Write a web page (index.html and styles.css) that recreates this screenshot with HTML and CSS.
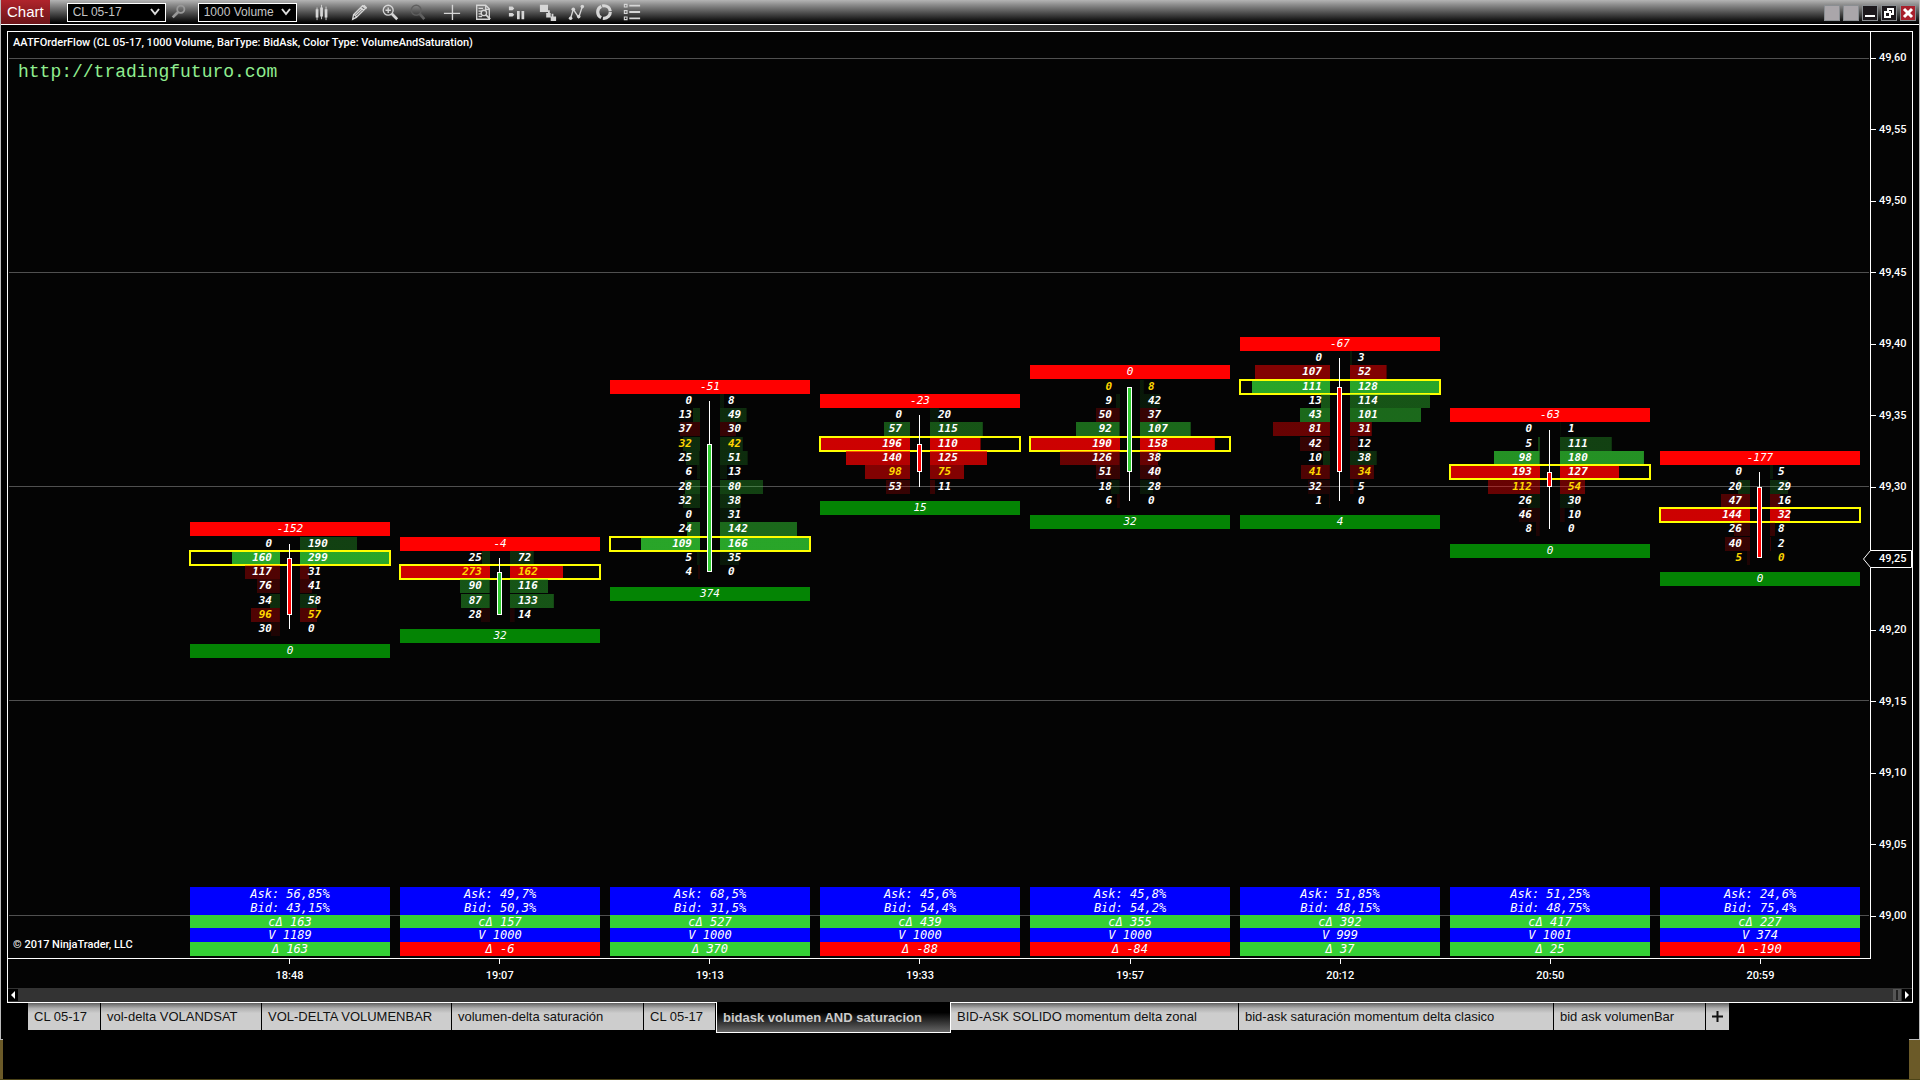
FILE: index.html
```html
<!DOCTYPE html>
<html lang="es">
<head>
    <meta charset="UTF-8">
    <meta name="viewport" content="width=device-width, initial-scale=1.0">
    <title>Chart - CL 05-17</title>
    <link rel="stylesheet" href="styles.css">
</head>
<body>
    <div class="window">
        <header class="toolbar">
            <h1 class="toolbar-title">Chart</h1>
            <div class="picker">
                <select class="instrument" aria-label="Instrument"><option>CL 05-17</option></select>
                <svg class="arrow" viewBox="0 0 10 8"><path d="M1 1l4 5 4-5" /></svg>
            </div>
            <button class="tool dim search" aria-label="Search">
                <svg viewBox="0 0 20 20"><circle cx="12" cy="7" r="4" stroke-width="2" /><path d="M9 10l-6 6" stroke-width="3" /></svg>
            </button>
            <div class="picker">
                <select class="interval" aria-label="Interval"><option>1000 Volume</option></select>
                <svg class="arrow" viewBox="0 0 10 8"><path d="M1 1l4 5 4-5" /></svg>
            </div>
            <div class="tools">
                <button class="tool" aria-label="Bar type">
                    <svg viewBox="0 0 20 20"><path d="M4.500 5v14M9.500 2v16M14.500 4v15" stroke-width="1" /><path class="solid" d="M3 7h3v9H3zM8 5h3v10H8zM13 7h3v9h-3z" /></svg>
                </button>
                <button class="tool space-l" aria-label="Drawing tools">
                    <svg viewBox="0 0 20 20"><path d="M3 18l1-5L14 3l3 3L7 16zM12 5l3 3M5 13l3 3M6 14l8-8" stroke-width="1.500" /><path class="solid" d="M14 3l2-1 3 3-1 2z" /></svg>
                </button>
                <button class="tool space-s" aria-label="Zoom in">
                    <svg viewBox="0 0 20 20"><circle cx="8" cy="8" r="5.500" stroke-width="1.500" /><path d="M5 8h6M8 5v6" stroke-width="1.500" /><path d="M12 12l6 6" stroke-width="3" /></svg>
                </button>
                <button class="tool off" aria-label="Zoom out" disabled>
                    <svg viewBox="0 0 20 20"><circle cx="8" cy="8" r="5.500" stroke-width="1.500" /><path d="M12 12l5 6" stroke-width="3" /></svg>
                </button>
                <button class="tool space-m" aria-label="Crosshair">
                    <svg viewBox="0 0 20 20"><path d="M1 11.500h18M10.500 2v17" stroke-width="1.500" /></svg>
                </button>
                <button class="tool space-s" aria-label="Data box">
                    <svg viewBox="0 0 20 20"><path d="M3 2.500h10l4 4V18H3zM13 2.500V7h4M5 6h5M5 9h3M5 12h3M5 15h4" stroke-width="1.500" /><circle cx="11" cy="11" r="3" stroke-width="1.500" /><path d="M13 13l5 5" stroke-width="2" /></svg>
                </button>
                <button class="tool space-m" aria-label="Chart trader">
                    <svg viewBox="0 0 20 20"><path class="solid" d="M1 4h4l2 2-2 2H1zM1 11h4l2 2-2 2H1zM10 9h3v9h-3zM15 9h3v9h-3z" /></svg>
                </button>
                <button class="tool space-s" aria-label="Data series">
                    <svg viewBox="0 0 20 20"><path class="solid" d="M1 2h9v8H1zM8 11h5v5H8zM13 15h6v5h-6zM10 8h2v4h-2zM14 12h2v4h-2z" /></svg>
                </button>
                <button class="tool" aria-label="Indicators">
                    <svg viewBox="0 0 20 20"><path d="M4 17L7 7l6 9 4-12" stroke-width="1.500" /><circle class="solid" cx="4" cy="17" r="2" /><circle class="solid" cx="7" cy="7" r="2" /><circle class="solid" cx="13" cy="15" r="2" /><circle class="solid" cx="17" cy="4" r="2" /></svg>
                </button>
                <button class="tool" aria-label="Strategies">
                    <svg viewBox="0 0 20 20"><circle cx="10" cy="10" r="7" stroke-width="3.500" stroke-dasharray="12 2 15 1 12 2" /></svg>
                </button>
                <button class="tool" aria-label="Properties">
                    <svg viewBox="0 0 20 20"><path d="M1.500 1.500h3v3h-3zM1.500 8.500h3v3h-3zM1.500 15.500h3v3h-3z" stroke-width="1.200" /><path d="M7 3h12M7 10h12M7 17h12" stroke-width="2" /></svg>
                </button>
            </div>
            <div class="window-buttons">
                <button class="blank" aria-label="Link instrument"></button>
                <button class="blank" aria-label="Link interval"></button>
                <button aria-label="Minimize"><svg viewBox="0 0 14 14"><path d="M2 10h10" /></svg></button>
                <button aria-label="Restore"><svg viewBox="0 0 14 14"><path d="M3 6h5v5H3zM6 6V3h5v5H8" /></svg></button>
                <button class="close" aria-label="Close"><svg viewBox="0 0 14 14"><path d="M3 3l8 8M11 3l-8 8" stroke-width="3" /></svg></button>
            </div>
        </header>

        <main class="workspace">
            <section class="panel">
                <div class="plot" id="plot"></div>
                <div class="price-axis" id="priceAxis"></div>
                <div class="time-axis" id="timeAxis"></div>
                <div class="scrollbar">
                    <button aria-label="Scroll left"><svg viewBox="0 0 10 12"><path d="M7 2v8L3 6z" /></svg></button>
                    <div class="thumb"></div>
                    <button aria-label="Scroll right"><svg viewBox="0 0 10 12"><path d="M3 2v8l4-4z" /></svg></button>
                </div>
                <p class="indicator-label">AATFOrderFlow (CL 05-17, 1000 Volume, BarType: BidAsk, Color Type: VolumeAndSaturation)</p>
                <p class="site">http://tradingfuturo.com</p>
                <p class="copyright">© 2017 NinjaTrader, LLC</p>
            </section>

            <nav class="tabs">
                <button>CL 05-17</button>
                <button>vol-delta VOLANDSAT</button>
                <button>VOL-DELTA VOLUMENBAR</button>
                <button>volumen-delta saturación</button>
                <button>CL 05-17</button>
                <button class="active">bidask volumen AND saturacion</button>
                <button>BID-ASK SOLIDO momentum delta zonal</button>
                <button>bid-ask saturación momentum delta clasico</button>
                <button>bid ask volumenBar</button>
                <button class="add" aria-label="New tab"><svg viewBox="0 0 11 11"><path d="M0 5.500h11M5.500 0v11" /></svg></button>
            </nav>
        </main>
    </div>
    <div class="desktop">
        <div class="edge-left"></div>
        <div class="edge-right"></div>
    </div>

    <script src="script.js"></script>
</body>
</html>
```
FILE: styles.css
```css
:root {
    --up: #32cd32;
    --down: #ff0000;
    --line: #ffffff;
    --grid: #505050;
    --back: #040404;
    --desktop: #6b5a28;
    --columns: 172px repeat(8, minmax(0, 1fr)) 0;
}

* {
    margin: 0;
    padding: 0;
    box-sizing: border-box;
}

body {
    display: flex;
    flex-direction: column;
    height: 100vh;
    background: #000;
    color: #fff;
    font-family: "Liberation Sans", Arial, sans-serif;
    font-size: 11px;
    overflow: hidden;
}

button,
select {
    font: inherit;
    color: inherit;
    background: none;
    border: none;
    border-radius: 0;
}

svg {
    display: block;
    fill: none;
    stroke: currentColor;
}

.window {
    flex: 1;
    min-height: 0;
    display: flex;
    flex-direction: column;
    border-left: 1px solid #bbb;
    border-right: 1px solid #bbb;
}

/* Toolbar */
.toolbar {
    display: flex;
    align-items: center;
    height: 25px;
    border-bottom: 1px solid var(--line);
    background: linear-gradient(#b4b4b4, #8c8c8c 20%, #000 96%);
}

.toolbar-title {
    align-self: stretch;
    padding: 0 6px;
    margin-right: 17px;
    font-size: 15px;
    font-weight: normal;
    line-height: 24px;
    background: linear-gradient(#b0242c, #6c1418);
}

.picker {
    position: relative;
}

.picker select {
    appearance: none;
    display: block;
    height: 19px;
    padding: 0 5px;
    border: 1px solid var(--line);
    background: #000;
    color: #c4c4c4;
    font-size: 12px;
}

.picker .instrument,
.picker .interval {
    width: 99px;
}

.picker .arrow {
    position: absolute;
    right: 6px;
    top: 5px;
    width: 10px;
    height: 8px;
    color: #ddd;
    stroke-width: 2;
    pointer-events: none;
}

.tool {
    width: 20px;
    height: 20px;
    color: #d6d6d6;
}

.tool svg {
    width: 18px;
    height: 18px;
    margin: 0 auto;
}

.tool .solid {
    fill: currentColor;
    stroke: none;
}

.search {
    margin: 0 9px 0 3px;
}

.dim {
    color: #999;
}

.off {
    color: #606060;
}

.tools {
    display: flex;
    gap: 8px;
    margin-left: 15px;
}

.space-s { margin-left: 3px; }
.space-m { margin-left: 6px; }
.space-l { margin-left: 9px; }

.window-buttons {
    display: flex;
    gap: 3px;
    margin: 2px 3px 0 auto;
}

.window-buttons button {
    width: 16px;
    height: 16px;
    border: 1px solid #8a8e92;
    background: #1c181c;
}

.window-buttons svg {
    width: 14px;
    height: 14px;
    stroke-width: 2;
}

.window-buttons .blank {
    background: #aaa6aa;
}

.window-buttons .close {
    background: #a8202c;
}

/* Chart panel */
.workspace {
    flex: 1;
    min-height: 0;
    display: flex;
    flex-direction: column;
    padding: 6px 6px 0;
    background: linear-gradient(to right, #000, #333 15%, #333 50%, #000 90%) top / 100% 6px no-repeat #000;
}

.panel {
    position: relative;
    flex: 1;
    min-height: 0;
    display: grid;
    grid-template-columns: minmax(0, 1fr) 41px;
    grid-template-rows: minmax(0, 1fr) 29px 14px;
    border: 1px solid var(--line);
    background: var(--back);
    font-family: Roboto, "Liberation Sans", sans-serif;
    font-weight: 500;
}

.plot,
.price-axis {
    display: grid;
    grid-template-rows: repeat(127, minmax(0, 1fr));
    padding-top: 19px;
}

.plot {
    grid-template-columns: var(--columns);
    column-gap: 10px;
    border-right: 1px solid var(--line);
    border-bottom: 1px solid var(--line);
}

.gridline {
    grid-column: 1 / -1;
    align-self: center;
    height: 1px;
    margin: 0 1px;
    border: none;
    background: var(--grid);
}

/* One footprint bar; its rows are half price ticks */
.footprint {
    grid-row: 1 / -1;
    display: grid;
    grid-template-rows: subgrid;
    grid-template-columns: minmax(0, 1fr);
    font: italic bold 11px/14px "DejaVu Sans Mono", monospace;
}

.footprint > * {
    grid-column: 1;
}

.head,
.foot,
.level {
    height: 14px;
}

.head,
.foot {
    text-align: center;
    font-weight: normal;
    background: var(--down);
}

.foot {
    background: #048404;
}

.level {
    display: grid;
    grid-template-columns: minmax(0, 1fr) minmax(0, 1fr);
    column-gap: 20px;
}

.level span {
    padding: 0 8px;
    background: linear-gradient(var(--fill), var(--fill)) left / var(--size) 100% no-repeat;
}

.level .bid {
    text-align: right;
    background-position: right;
}

.rise {
    --fill: rgb(50 205 50 / var(--strength));
}

.fall {
    --fill: rgb(255 0 0 / var(--strength));
}

.traded {
    color: #ffd700;
}

.poc {
    outline: 2px solid #ffff00;
    outline-offset: -1px;
}

.wick,
.candle {
    justify-self: center;
    margin-right: 1px;
}

.wick {
    width: 1px;
    background: #fff;
}

.candle {
    width: 5px;
    border: 1px solid #fff;
}

.candle.up { background: var(--up); }
.candle.down { background: var(--down); }

/* Totals under each bar */
.totals {
    grid-row: 1 / -1;
    align-self: end;
    z-index: 1;
    margin-bottom: 2px;
    font: italic 12px/14px "DejaVu Sans Mono", monospace;
    text-align: center;
}

.totals p {
    height: 14px;
    background: #0000ff;
}

.totals .cumulative {
    height: 13px;
}

.totals .positive { background: #35d035; }
.totals .negative { background: var(--down); }

/* Axes */
.price {
    grid-column: 1;
    align-self: center;
    display: flex;
    align-items: center;
    gap: 3px;
    height: 14px;
    line-height: 14px;
}

.price::before {
    content: "";
    width: 5px;
    height: 1px;
    background: var(--line);
}

.price.last {
    z-index: 1;
}

.price.last::before {
    background: none;
}

.marker {
    grid-column: 1;
    align-self: center;
    width: 49px;
    height: 18px;
    margin-left: -8px;
}

.time-axis {
    grid-column: 1;
    display: grid;
    grid-template-columns: var(--columns);
    column-gap: 10px;
}

.time {
    display: flex;
    flex-direction: column;
    align-items: center;
    gap: 5px;
    margin-right: 1px;
    line-height: 14px;
}

.time::before {
    content: "";
    width: 1px;
    height: 5px;
    background: var(--line);
}

.scrollbar {
    grid-column: 1 / -1;
    display: flex;
    justify-content: space-between;
    padding: 1px 0;
    background: #333;
}

.scrollbar button {
    width: 10px;
    background: #000;
}

.scrollbar svg {
    width: 10px;
    height: 12px;
    fill: #fff;
    stroke: none;
}

.thumb {
    width: 8px;
    margin: 0 1px 0 auto;
    border: 1px solid #555;
    background: linear-gradient(to right, #555 40%, #222 40%, #222 60%, #555 60%);
}

.indicator-label,
.site,
.copyright {
    position: absolute;
    left: 5px;
    line-height: 14px;
}

.indicator-label {
    top: 4px;
}

.site {
    top: 30px;
    left: 10px;
    font: 18px/20px "Liberation Mono", monospace;
    color: #90ee90;
}

.copyright {
    bottom: 50px;
}

/* Tabs */
.tabs {
    display: grid;
    grid-template-columns: 73px 161px 190px 192px 72px 235px 288px 315px 152px 23px;
    align-items: start;
    height: 36px;
    padding-left: 21px;
}

.tabs button {
    height: 27px;
    padding: 0 6px;
    border-right: 1px solid #000;
    background: linear-gradient(#606060, #b0b0b0 20%, #cdcdcd 38%);
    color: #111;
    font-size: 13px;
    text-align: left;
    white-space: nowrap;
}

.tabs .active {
    z-index: 1;
    height: 31px;
    margin-top: -1px;
    border: 1px solid var(--line);
    border-top: none;
    background: linear-gradient(#000 35%, #666);
    color: #ccc;
    font-weight: bold;
}

.tabs .add {
    border: none;
}

.tabs .add svg {
    width: 11px;
    height: 11px;
    stroke-width: 2;
}

/* Desktop showing below the window */
.desktop {
    display: flex;
    justify-content: space-between;
    height: 41px;
    border-bottom: 1px solid #4c4418;
}

.edge-left,
.edge-right {
    width: 3px;
    border-top: 1px solid #bbb;
    background: var(--desktop);
}

.edge-right {
    width: 11px;
}
```
FILE: script.js
```js
// Price of the first tick row and number of rows, one row = 0.01
const TOP_PRICE = 4960;
const ROWS = 60;
const LAST_PRICE_ROW = 35;

// first: row of the highest level, candle: [top row, bottom row], traded: index of the gold level
const bars = [
    { time: '18:48', head: -152, foot: 0, first: 34, candle: [35, 39], dir: 'down', traded: 5,
      levels: [[0, 190], [160, 299], [117, 31], [76, 41], [34, 58], [96, 57], [30, 0]],
      ask: '56,85%', bid: '43,15%', cumulative: 163, volume: 1189, delta: 163 },
    { time: '19:07', head: -4, foot: 32, first: 35, candle: [36, 39], dir: 'up', traded: 1,
      levels: [[25, 72], [273, 162], [90, 116], [87, 133], [28, 14]],
      ask: '49,7%', bid: '50,3%', cumulative: 157, volume: 1000, delta: -6 },
    { time: '19:13', head: -51, foot: 374, first: 24, candle: [27, 36], dir: 'up', traded: 3,
      levels: [[0, 8], [13, 49], [37, 30], [32, 42], [25, 51], [6, 13], [28, 80], [32, 38], [0, 31], [24, 142], [109, 166], [5, 35], [4, 0]],
      ask: '68,5%', bid: '31,5%', cumulative: 527, volume: 1000, delta: 370 },
    { time: '19:33', head: -23, foot: 15, first: 25, candle: [27, 29], dir: 'down', traded: 4,
      levels: [[0, 20], [57, 115], [196, 110], [140, 125], [98, 75], [53, 11]],
      ask: '45,6%', bid: '54,4%', cumulative: 439, volume: 1000, delta: -88 },
    { time: '19:57', head: 0, foot: 32, first: 23, candle: [23, 29], dir: 'up', traded: 0,
      levels: [[0, 8], [9, 42], [50, 37], [92, 107], [190, 158], [126, 38], [51, 40], [18, 28], [6, 0]],
      ask: '45,8%', bid: '54,2%', cumulative: 355, volume: 1000, delta: -84 },
    { time: '20:12', head: -67, foot: 4, first: 21, candle: [23, 29], dir: 'down', traded: 8,
      levels: [[0, 3], [107, 52], [111, 128], [13, 114], [43, 101], [81, 31], [42, 12], [10, 38], [41, 34], [32, 5], [1, 0]],
      ask: '51,85%', bid: '48,15%', cumulative: 392, volume: 999, delta: 37 },
    { time: '20:50', head: -63, foot: 0, first: 26, candle: [29, 30], dir: 'down', traded: 4,
      levels: [[0, 1], [5, 111], [98, 180], [193, 127], [112, 54], [26, 30], [46, 10], [8, 0]],
      ask: '51,25%', bid: '48,75%', cumulative: 417, volume: 1001, delta: 25 },
    { time: '20:59', head: -177, foot: 0, first: 29, candle: [30, 35], dir: 'down', traded: 6,
      levels: [[0, 5], [20, 29], [47, 16], [144, 32], [26, 8], [40, 2], [5, 0]],
      ask: '24,6%', bid: '75,4%', cumulative: 227, volume: 374, delta: -190 }
];

const plot = document.getElementById('plot');
const priceAxis = document.getElementById('priceAxis');
const timeAxis = document.getElementById('timeAxis');

// Grid lines: every tick takes two grid rows, so its centre is a line too
const rowOf = n => `${2 * n + 1} / span 2`;
const centreOf = n => 2 * n + 2;

function drawAxis() {
    for (let n = 0; n <= ROWS; n += 5) {
        const price = ((TOP_PRICE - n) / 100).toFixed(2).replace('.', ',');
        if (n === LAST_PRICE_ROW) {
            priceAxis.innerHTML += `<svg class="marker" viewBox="0 0 49 18" style="grid-row: ${rowOf(n)}"><path d="M.5 9L7.500 .5H48.500V17.500H7.500z" fill="#000"/></svg>`;
        }
        priceAxis.innerHTML += `<div class="price ${n === LAST_PRICE_ROW ? 'last' : ''}" style="grid-row: ${rowOf(n)}">${price}</div>`;
        if (n % 15 === 0) {
            plot.innerHTML += `<hr class="gridline" style="grid-row: ${rowOf(n)}">`;
        }
    }
}

function drawLevels(bar) {
    const widest = Math.max(...bar.levels.flat());
    const totals = bar.levels.map(([bid, ask]) => bid + ask);
    const biggest = Math.max(...totals);

    return bar.levels.map(([bid, ask], i) => {
        const strength = Math.max(1, Math.round(8 * totals[i] / biggest)) / 10;
        const classes = ['level', ask > bid ? 'rise' : 'fall'];
        if (i === bar.traded) classes.push('traded');
        if (totals[i] === biggest) classes.push('poc');
        return `<div class="${classes.join(' ')}" style="grid-row: ${rowOf(bar.first + i)}; --strength: ${strength}">
            <span class="bid" style="--size: ${bid / widest * 100}%">${bid}</span>
            <span class="ask" style="--size: ${ask / widest * 100}%">${ask}</span>
        </div>`;
    }).join('');
}

function drawBar(bar, index) {
    const last = bar.first + bar.levels.length - 1;
    const sign = value => value < 0 ? 'negative' : 'positive';

    plot.innerHTML += `
        <div class="footprint" style="grid-column: ${index + 2}">
            <div class="head" style="grid-row: ${rowOf(bar.first - 1)}">${bar.head}</div>
            ${drawLevels(bar)}
            <div class="foot" style="grid-row: ${2 * last + 4} / span 2">${bar.foot}</div>
            <div class="wick" style="grid-row: ${centreOf(bar.first)} / ${centreOf(last)}"></div>
            <div class="candle ${bar.dir}" style="grid-row: ${centreOf(bar.candle[0])} / ${centreOf(bar.candle[1])}"></div>
        </div>
        <div class="totals" style="grid-column: ${index + 2}">
            <p>Ask: ${bar.ask}</p>
            <p>Bid: ${bar.bid}</p>
            <p class="cumulative ${sign(bar.cumulative)}">cΔ ${bar.cumulative}</p>
            <p>V ${bar.volume}</p>
            <p class="${sign(bar.delta)}">Δ ${bar.delta}</p>
        </div>`;
    timeAxis.innerHTML += `<div class="time" style="grid-column: ${index + 2}">${bar.time}</div>`;
}

drawAxis();
bars.forEach(drawBar);
```
